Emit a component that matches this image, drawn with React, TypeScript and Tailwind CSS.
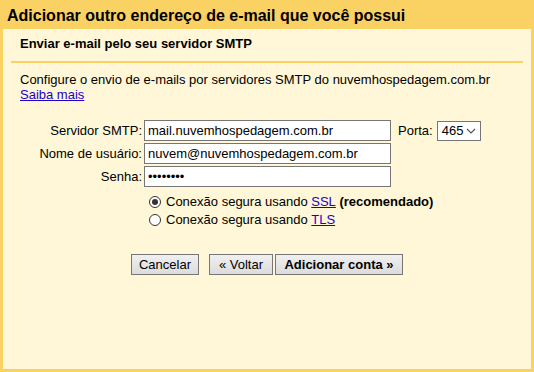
import React from "react";

export default function App() {
  const font = { fontFamily: '"Liberation Sans", Arial, sans-serif' };
  const inputCls =
    "w-[247px] h-[21px] border border-[#767676] bg-white px-[3px] text-[13px] text-black outline-none";
  return (
    <div
      className="w-[534px] h-[372px] bg-[#fad163] px-[3px] pb-[3px] flex flex-col text-black"
      style={font}
    >
      <div className="h-[29px] pl-[4px] pt-[6px] text-[16px] font-bold leading-[19px] text-black">
        Adicionar outro endereço de e-mail que você possui
      </div>
      <div className="flex-1 bg-[#fff7d7] px-[8px]">
        <div className="border-b-2 border-[#fad163] pl-[9px] pt-[7px] pb-[10px] text-[13px] font-bold leading-[15px]">
          Enviar e-mail pelo seu servidor SMTP
        </div>
        <div className="pl-[9px] pt-[9px] text-[13px] leading-[15px]">
          <div>
            Configure o envio de e-mails por servidores SMTP do nuvemhospedagem.com.br
          </div>
          <a href="#" className="text-[#2200cc] underline">
            Saiba mais
          </a>
        </div>
        <div className="mt-[18px] flex flex-col gap-[2px] text-[13px]">
          <div className="flex items-center">
            <label className="w-[133px] pr-[2px] text-right leading-[15px]">Servidor SMTP:</label>
            <input className={inputCls} readOnly value="mail.nuvemhospedagem.com.br" />
            <span className="ml-[7px] mr-[4px]">Porta:</span>
            <div className="flex h-[20px] w-[44px] items-center justify-between border border-[#767676] bg-white pl-[4px] pr-[4px]">
              <span>465</span>
              <svg width="10" height="6" viewBox="0 0 10 6">
                <path d="M1 1 L5 5 L9 1" fill="none" stroke="#555" strokeWidth="1.2" />
              </svg>
            </div>
          </div>
          <div className="flex items-center">
            <label className="w-[133px] pr-[2px] text-right leading-[15px]">Nome de usuário:</label>
            <input className={inputCls} readOnly value="nuvem@nuvemhospedagem.com.br" />
          </div>
          <div className="flex items-center">
            <label className="w-[133px] pr-[2px] text-right leading-[15px]">Senha:</label>
            <input type="password" className={inputCls} readOnly value="12345678" />
          </div>
        </div>
        <div className="mt-[7px] ml-[138px] flex flex-col gap-[3px] text-[13px] leading-[15px]">
          <label className="flex items-center">
            <span className="mr-[5px] flex h-[12px] w-[12px] items-center justify-center rounded-full border border-[#333] bg-white">
              <span className="h-[6px] w-[6px] rounded-full bg-[#333]" />
            </span>
            Conexão segura usando&nbsp;
            <a href="#" className="text-[#2200cc] underline">SSL</a>
            &nbsp;<b>(recomendado)</b>
          </label>
          <label className="flex items-center">
            <span className="mr-[5px] h-[12px] w-[12px] rounded-full border border-[#333] bg-white" />
            Conexão segura usando&nbsp;
            <a href="#" className="text-[#2200cc] underline">TLS</a>
          </label>
        </div>
        <div className="mt-[27px] ml-[120px] flex text-[13px]">
          <button className="h-[21px] w-[68px] border border-[#767676] bg-gradient-to-b from-[#f0f0f0] to-[#dcdcdc] text-black">
            Cancelar
          </button>
          <button className="ml-[10px] h-[21px] w-[64px] border border-[#767676] bg-gradient-to-b from-[#f0f0f0] to-[#dcdcdc] text-black">
            « Voltar
          </button>
          <button className="ml-[2px] h-[21px] w-[128px] border border-[#767676] bg-gradient-to-b from-[#f0f0f0] to-[#dcdcdc] font-bold text-black">
            Adicionar conta »
          </button>
        </div>
      </div>
    </div>
  );
}
